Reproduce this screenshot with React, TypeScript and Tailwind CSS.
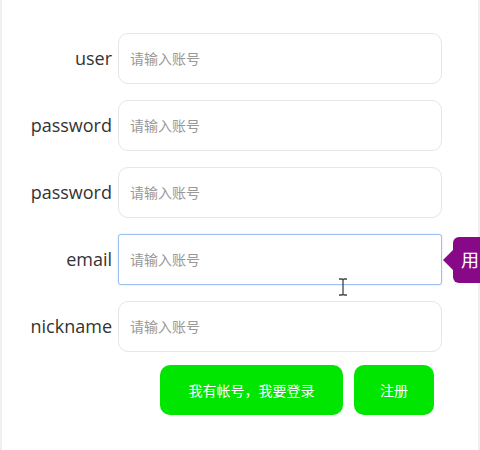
const FIELDS = ["user", "password", "password", "email", "nickname"];

export default function App() {
    return (
        <div className="min-h-[450px] w-[480px] bg-[#efefef] px-[2px] overflow-hidden" style={{ fontFamily: '"Open Sans", "Noto Sans CJK SC", sans-serif' }}>
            <div className="relative min-h-[450px] bg-white pt-[33px]">
                <div className="flex flex-col gap-[16px]">
                    {FIELDS.map((label, i) => (
                        <div key={i} className="relative flex items-center gap-[6px]">
                            <label className="w-[110px] text-right text-[18px] text-[#333]">{label}</label>
                            <input
                                placeholder="请输入账号"
                                className={`h-[51px] w-[324px] bg-white pl-[11px] text-[14px] outline-none placeholder:text-[#999] ${
                                    label === "email"
                                        ? "rounded-[3px] border border-[#9dbff2] shadow-[0_0_2px_#c6dafa]"
                                        : "rounded-[10px] border border-[#e6e6e6]"
                                }`}
                            />
                            {label === "email" && (
                                <>
                                    {/* tooltip */}
                                    <div className="absolute left-[441px] top-[3px] flex h-[46px] items-center">
                                        <div className="h-0 w-0 border-y-[10px] border-r-[10px] border-y-transparent border-r-[#870987]" />
                                        <div className="flex h-[46px] w-[40px] items-center rounded-[6px] bg-[#870987] pl-[8px] text-[18px] text-white">
                                            用
                                        </div>
                                    </div>
                                    {/* mouse cursor */}
                                    <svg className="absolute left-[336px] top-[44px]" width="10" height="18" viewBox="0 0 10 18">
                                        <path d="M1 1h3l1 1 1-1h3M5 2v14M1 17h3l1-1 1 1h3" fill="none" stroke="#444" strokeWidth="1.3" />
                                    </svg>
                                </>
                            )}
                        </div>
                    ))}
                </div>

                <div className="mt-[13px] flex gap-[11px] pl-[158px]">
                    <button className="h-[50px] w-[183px] rounded-[10px] bg-[#00e600] text-[14px] text-white">
                        我有帐号，我要登录
                    </button>
                    <button className="h-[50px] w-[80px] rounded-[10px] bg-[#00e600] text-[14px] text-white">
                        注册
                    </button>
                </div>
            </div>
        </div>
    );
}
